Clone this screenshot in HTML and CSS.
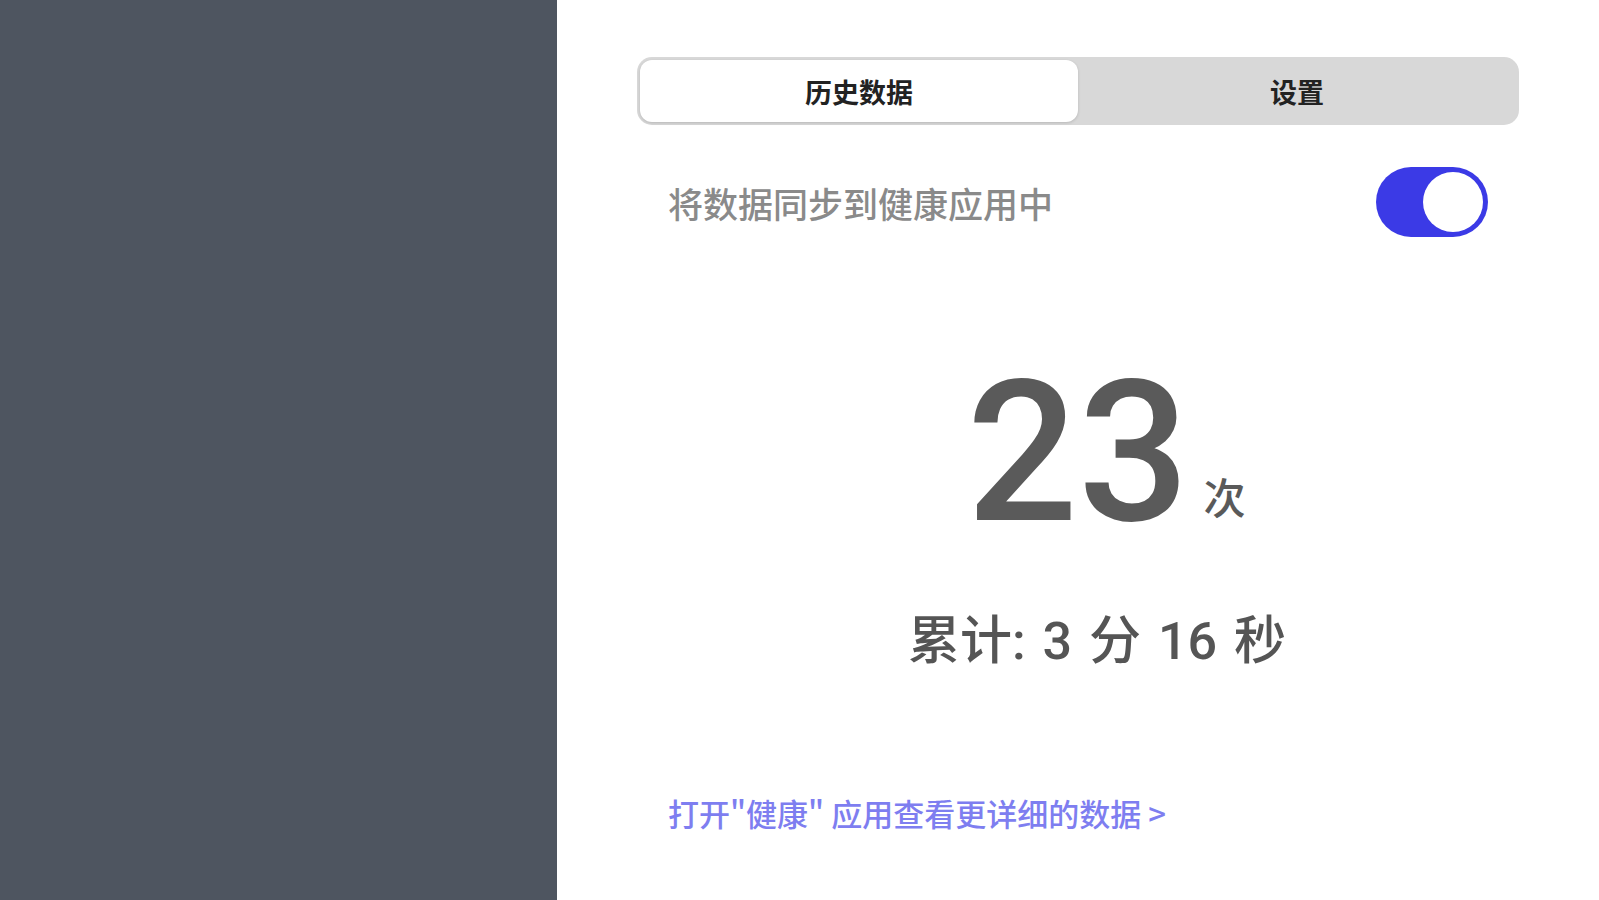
FILE: index.html
```html
<!DOCTYPE html>
<html lang="zh">
<head>
<meta charset="utf-8">
<link rel="stylesheet" href="styles.css">
</head>
<body>
<div class="app">
  <aside class="sidebar"></aside>
  <main class="content">
    <div class="segmented">
      <div class="seg seg-active">历史数据</div>
      <div class="seg">设置</div>
    </div>
    <div class="sync-row">
      <span class="sync-label">将数据同步到健康应用中</span>
      <div class="toggle"><div class="knob"></div></div>
    </div>
    <div class="count">
      <span class="count-num">23<span class="count-unit">次</span></span>
    </div>
    <div class="total">累计: 3 分 16 秒</div>
    <a class="health-link">打开"健康" 应用查看更详细的数据 &gt;</a>
  </main>
</div>
</body>
</html>
```
FILE: styles.css
```css
html, body {
  margin: 0;
  padding: 0;
  height: 100%;
  background: #ffffff;
  font-family: "Roboto", "Noto Sans CJK SC", sans-serif;
}
.app {
  display: flex;
  height: 900px;
}
.sidebar {
  width: 557px;
  flex: 0 0 557px;
  background: #4e5560;
}
.content {
  flex: 1;
  padding: 57px 80px 0 80px;
  display: flex;
  flex-direction: column;
}
.segmented {
  display: flex;
  height: 68px;
  box-sizing: border-box;
  padding: 3px;
  border-radius: 15px;
  background: #d8d8d8;
}
.seg {
  flex: 1;
  display: flex;
  align-items: center;
  justify-content: center;
  font-family: "Noto Sans CJK SC", sans-serif;
  font-size: 27px;
  font-weight: 700;
  color: #222222;
  border-radius: 12px;
}
.seg-active {
  background: #ffffff;
  box-shadow: 0 1px 3px rgba(0,0,0,0.15);
}
.sync-row {
  display: flex;
  align-items: center;
  justify-content: space-between;
  padding: 0 31px;
  margin-top: 42px;
  height: 70px;
}
.sync-label {
  font-family: "Noto Sans CJK SC", sans-serif;
  font-size: 35px;
  font-weight: 500;
  color: #8a8a8a;
}
.toggle {
  width: 112px;
  height: 70px;
  border-radius: 35px;
  background: #3b3ae6;
  box-sizing: border-box;
  padding: 5px;
  display: flex;
  justify-content: flex-end;
}
.knob {
  width: 60px;
  height: 60px;
  border-radius: 50%;
  background: #ffffff;
}
.count {
  display: flex;
  justify-content: center;
  margin-top: 122px;
}
.count-num {
  position: relative;
  font-family: "Roboto", "Liberation Sans", sans-serif;
  font-weight: 500;
  font-size: 196px;
  line-height: 188px;
  color: #5a5a5a;
}
.count-unit {
  position: absolute;
  left: 100%;
  bottom: 30px;
  margin-left: 14px;
  font-family: "Noto Sans CJK SC", sans-serif;
  font-weight: 500;
  font-size: 42px;
  line-height: 1;
  color: #5a5a5a;
}
.total {
  text-align: center;
  margin-top: 52px;
  padding-left: 38px;
  font-family: "Roboto", "Noto Sans CJK SC", sans-serif;
  font-weight: 500;
  font-size: 52px;
  word-spacing: 4px;
  color: #555555;
}
.health-link {
  margin-top: 116px;
  padding-left: 31px;
  font-family: "Noto Sans CJK SC", sans-serif;
  font-weight: 500;
  font-size: 31px;
  color: #7e7ef0;
  text-decoration: none;
}
```
